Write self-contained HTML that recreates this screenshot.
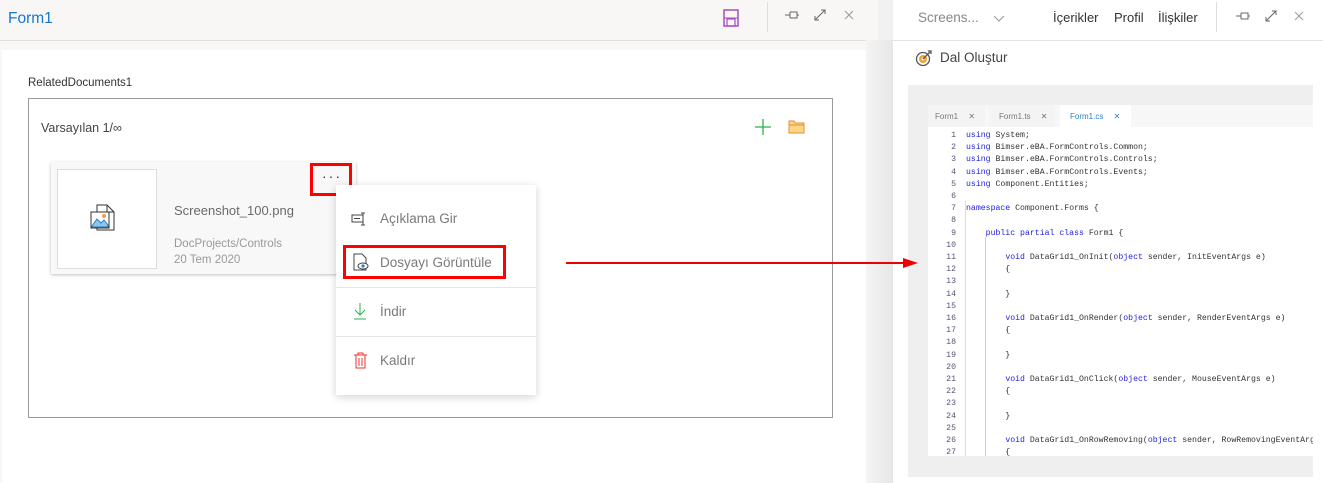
<!DOCTYPE html>
<html><head><meta charset="utf-8"><style>
*{margin:0;padding:0;box-sizing:border-box}
body{width:1323px;height:483px;overflow:hidden;background:#f1f1f1;font-family:"Liberation Sans","DejaVu Sans",sans-serif;position:relative}
.a{position:absolute;white-space:nowrap}
.code{font-family:"Liberation Mono","DejaVu Sans Mono",monospace;font-size:8.2px;line-height:12.2px;color:#333}
.kw{color:#2222dd}
.mi{font-size:13.5px;color:#7a7a7a}
</style></head><body>
<div class="a" style="left:0;top:0;width:878px;height:483px;background:#f8f7f6"></div>
<div class="a" style="left:0;top:40px;width:878px;height:1px;background:#e0dfde"></div>
<div class="a" style="left:8px;top:10px;font-size:15.5px;color:#1477d4">Form1</div>
<svg class="a" style="left:723px;top:9px" width="16" height="18" viewBox="0 0 16 18"><rect x="1" y="1" width="14" height="16" fill="none" stroke="#a44ec0" stroke-width="1.5"/><rect x="4" y="10" width="8" height="7" fill="none" stroke="#a44ec0" stroke-width="1.2"/><line x1="1" y1="9" x2="15" y2="9" stroke="#a44ec0"/></svg>
<div class="a" style="left:767px;top:2px;width:1px;height:30px;background:#ddd"></div>
<svg class="a" style="left:785px;top:10px" width="14" height="10"><path d="M0 5H5M5 2V8M5 2H12V8H5M12 5H14" stroke="#666" fill="none"/></svg>
<svg class="a" style="left:814px;top:9px" width="12" height="12"><path d="M1 11L11 1M7 1H11V5M1 7V11H5" stroke="#666" fill="none"/></svg>
<svg class="a" style="left:844px;top:10px" width="10" height="10"><path d="M1 1L9 9M9 1L1 9" stroke="#999" fill="none"/></svg>
<div class="a" style="left:2px;top:50px;width:864px;height:433px;background:#fff"></div>
<div class="a" style="left:28px;top:77px;font-size:11.5px;color:#333">RelatedDocuments1</div>
<div class="a" style="left:28px;top:98px;width:805px;height:320px;border:1px solid #9a9a9a"></div>
<div class="a" style="left:41px;top:121px;font-size:12.5px;color:#444">Varsayılan 1/∞</div>
<svg class="a" style="left:755px;top:119px" width="16" height="16"><path d="M8 0V16M0 8H16" stroke="#2bb24c" stroke-width="1.3"/></svg>
<svg class="a" style="left:788px;top:119px" width="17" height="15"><path d="M1 2H6L7 4H16V14H1Z" fill="#fbd888" stroke="#e88b2e"/><path d="M1 6H16" stroke="#e88b2e"/></svg>
<div class="a" style="left:51px;top:162px;width:305px;height:112px;background:#f8f8f8;box-shadow:0 1px 3px rgba(0,0,0,.25)"></div>
<div class="a" style="left:57px;top:169px;width:100px;height:100px;background:#fff;border:1px solid #ddd"></div>
<svg class="a" style="left:90px;top:204px" width="30" height="30" viewBox="0 0 30 30"><path d="M7 1H17L24 8V26H7Z" fill="#fff" stroke="#333"/><path d="M17 1V8H24" fill="none" stroke="#333"/><rect x="1" y="8" width="18" height="16" fill="#fff" stroke="#333"/><path d="M2 22L7 15L11 19L14 16L18 21V23H2Z" fill="#8ec6ea" stroke="#2b7fc0"/><circle cx="14" cy="12" r="2" fill="#f0a040"/></svg>
<div class="a" style="left:174px;top:203px;font-size:13px;color:#6a6a6a">Screenshot_100.png</div>
<div class="a" style="left:174px;top:238px;font-size:11.5px;color:#9a9a9a">DocProjects/Controls</div>
<div class="a" style="left:174px;top:254px;font-size:11.5px;color:#9a9a9a">20 Tem 2020</div>
<div class="a" style="left:310px;top:163px;width:42px;height:33px;border:3px solid #f00"></div>
<div class="a" style="left:322px;top:168px;font-size:14px;color:#333;letter-spacing:2px">···</div>
<div class="a" style="left:336px;top:185px;width:200px;height:210px;background:#fff;box-shadow:0 2px 8px rgba(0,0,0,.18)"></div>
<svg class="a" style="left:351px;top:212px" width="17" height="14"><rect x="1" y="3" width="11" height="7" fill="none" stroke="#444"/><path d="M3 6.5H9M12 1V13M10 1H14M10 13H14" stroke="#444" fill="none"/></svg>
<div class="a mi" style="left:380px;top:211px">Açıklama Gir</div>
<div class="a" style="left:343px;top:245px;width:163px;height:34px;border:3px solid #f00"></div>
<svg class="a" style="left:353px;top:253px" width="16" height="18"><path d="M1 1H9L13 5V17H1Z" fill="none" stroke="#444"/><ellipse cx="10" cy="13" rx="5" ry="3" fill="#fff" stroke="#444"/><circle cx="10" cy="13" r="1.6" fill="#2b7fc0"/></svg>
<div class="a mi" style="left:380px;top:255px">Dosyayı Görüntüle</div>
<div class="a" style="left:336px;top:287px;width:200px;height:1px;background:#e5e5e5"></div>
<svg class="a" style="left:353px;top:303px" width="14" height="17"><path d="M7 0V12M2 7L7 12L12 7M1 16H13" stroke="#2bb24c" fill="none"/></svg>
<div class="a mi" style="left:380px;top:304px">İndir</div>
<div class="a" style="left:336px;top:336px;width:200px;height:1px;background:#e5e5e5"></div>
<svg class="a" style="left:354px;top:352px" width="13" height="17"><path d="M0 3H13M4 3V1H9V3M2 3V16H11V3M5 6V14M8 6V14" stroke="#e33" fill="none"/></svg>
<div class="a mi" style="left:380px;top:353px">Kaldır</div>
<div class="a" style="left:866px;top:40px;width:27px;height:443px;background:linear-gradient(90deg,#f4f4f4,#e6e6e6)"></div>
<div class="a" style="left:893px;top:0;width:430px;height:483px;background:#fff"></div>
<div class="a" style="left:893px;top:40px;width:430px;height:1px;background:#e3e3e3"></div>
<div class="a" style="left:918px;top:10px;font-size:13.5px;color:#888">Screens...</div>
<svg class="a" style="left:993px;top:15px" width="12" height="7"><path d="M1 1L6 6L11 1" stroke="#999" fill="none"/></svg>
<div class="a" style="left:1053px;top:10px;font-size:13px;color:#333">İçerikler</div>
<div class="a" style="left:1114px;top:10px;font-size:13px;color:#333">Profil</div>
<div class="a" style="left:1158px;top:10px;font-size:13px;color:#333">İlişkiler</div>
<div class="a" style="left:1216px;top:2px;width:1px;height:30px;background:#ddd"></div>
<svg class="a" style="left:1236px;top:11px" width="14" height="10"><path d="M0 5H5M5 2V8M5 2H12V8H5M12 5H14" stroke="#666" fill="none"/></svg>
<svg class="a" style="left:1265px;top:10px" width="12" height="12"><path d="M1 11L11 1M7 1H11V5M1 7V11H5" stroke="#666" fill="none"/></svg>
<svg class="a" style="left:1294px;top:11px" width="10" height="10"><path d="M1 1L9 9M9 1L1 9" stroke="#999" fill="none"/></svg>
<svg class="a" style="left:915px;top:49px" width="18" height="18"><circle cx="8" cy="10" r="6.5" fill="#fff" stroke="#555" stroke-width="1.3"/><circle cx="8" cy="10" r="4" fill="#f0a030"/><circle cx="8" cy="10" r="1.5" fill="#fff"/><path d="M8 10L15 3M13 2H16V5" stroke="#555" fill="none" stroke-width="1.3"/></svg>
<div class="a" style="left:940px;top:50px;font-size:13.5px;color:#444">Dal Oluştur</div>
<div class="a" style="left:908px;top:85px;width:405px;height:392px;background:#efefef"></div>
<div class="a" style="left:928px;top:105px;width:385px;height:22px;background:#f7f7f7"></div>
<div class="a" style="left:928px;top:105px;width:57px;height:22px;background:#f4f4f4;font-size:8px;color:#777;padding:7px 0 0 7px">Form1 <span style="margin-left:8px">✕</span></div>
<div class="a" style="left:989px;top:105px;width:66px;height:22px;background:#f4f4f4;font-size:8px;color:#777;padding:7px 0 0 10px">Form1.ts <span style="margin-left:8px">✕</span></div>
<div class="a" style="left:1060px;top:105px;width:71px;height:22px;background:#fff;font-size:8px;color:#2b7fc0;padding:7px 0 0 10px">Form1.cs <span style="margin-left:8px">✕</span></div>
<div class="a" style="left:928px;top:127px;width:385px;height:329px;background:#fff"></div>
<div class="a" style="left:965px;top:201px;width:1px;height:255px;background:#ddd"></div>
<div class="a" style="left:985px;top:237px;width:1px;height:219px;background:#ccc"></div>
<div class="a code" style="left:936px;top:130px;width:20px;text-align:right;color:#557">1<br>2<br>3<br>4<br>5<br>6<br>7<br>8<br>9<br>10<br>11<br>12<br>13<br>14<br>15<br>16<br>17<br>18<br>19<br>20<br>21<br>22<br>23<br>24<br>25<br>26<br>27</div>
<div class="a code" style="left:966px;top:130px;width:347px;height:326px;overflow:hidden"><span class="kw">using</span> System;<br><span class="kw">using</span> Bimser.eBA.FormControls.Common;<br><span class="kw">using</span> Bimser.eBA.FormControls.Controls;<br><span class="kw">using</span> Bimser.eBA.FormControls.Events;<br><span class="kw">using</span> Component.Entities;<br>&nbsp;<br><span class="kw">namespace</span> Component.Forms {<br>&nbsp;<br>&nbsp;&nbsp;&nbsp;&nbsp;<span class="kw">public partial class</span> Form1 {<br>&nbsp;<br>&nbsp;&nbsp;&nbsp;&nbsp;&nbsp;&nbsp;&nbsp;&nbsp;<span class="kw">void</span> DataGrid1_OnInit(<span class="kw">object</span> sender, InitEventArgs e)<br>&nbsp;&nbsp;&nbsp;&nbsp;&nbsp;&nbsp;&nbsp;&nbsp;{<br>&nbsp;<br>&nbsp;&nbsp;&nbsp;&nbsp;&nbsp;&nbsp;&nbsp;&nbsp;}<br>&nbsp;<br>&nbsp;&nbsp;&nbsp;&nbsp;&nbsp;&nbsp;&nbsp;&nbsp;<span class="kw">void</span> DataGrid1_OnRender(<span class="kw">object</span> sender, RenderEventArgs e)<br>&nbsp;&nbsp;&nbsp;&nbsp;&nbsp;&nbsp;&nbsp;&nbsp;{<br>&nbsp;<br>&nbsp;&nbsp;&nbsp;&nbsp;&nbsp;&nbsp;&nbsp;&nbsp;}<br>&nbsp;<br>&nbsp;&nbsp;&nbsp;&nbsp;&nbsp;&nbsp;&nbsp;&nbsp;<span class="kw">void</span> DataGrid1_OnClick(<span class="kw">object</span> sender, MouseEventArgs e)<br>&nbsp;&nbsp;&nbsp;&nbsp;&nbsp;&nbsp;&nbsp;&nbsp;{<br>&nbsp;<br>&nbsp;&nbsp;&nbsp;&nbsp;&nbsp;&nbsp;&nbsp;&nbsp;}<br>&nbsp;<br>&nbsp;&nbsp;&nbsp;&nbsp;&nbsp;&nbsp;&nbsp;&nbsp;<span class="kw">void</span> DataGrid1_OnRowRemoving(<span class="kw">object</span> sender, RowRemovingEventArgs e)<br>&nbsp;&nbsp;&nbsp;&nbsp;&nbsp;&nbsp;&nbsp;&nbsp;{</div>
<svg class="a" style="left:560px;top:255px" width="362" height="16"><path d="M6 8H345" stroke="#e00" stroke-width="2"/><path d="M343 3L358 8L343 13Z" fill="#e00"/></svg>
</body></html>
